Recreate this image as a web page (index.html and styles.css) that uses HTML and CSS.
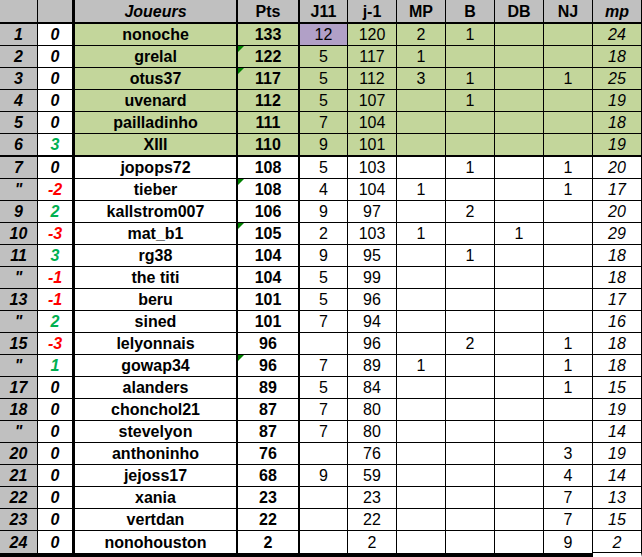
FILE: index.html
```html
<!DOCTYPE html>
<html lang="fr">
<head>
<meta charset="utf-8">
<title>Classement</title>
<link rel="stylesheet" href="styles.css">
</head>
<body>
<div class="sheet">
  <div class="row head">
    <div class="c"></div><div class="c"></div><div class="c it">Joueurs</div><div class="c">Pts</div><div class="c">J11</div><div class="c">j-1</div><div class="c">MP</div><div class="c">B</div><div class="c">DB</div><div class="c">NJ</div><div class="c it">mp</div>
  </div>
  <div class="row top">
    <div class="c">1</div><div class="c">0</div><div class="c">nonoche</div><div class="c">133</div><div class="c purple">12</div><div class="c">120</div><div class="c">2</div><div class="c">1</div><div class="c"></div><div class="c"></div><div class="c">24</div>
  </div>
  <div class="row top">
    <div class="c">2</div><div class="c">0</div><div class="c">grelal</div><div class="c tri">122</div><div class="c">5</div><div class="c">117</div><div class="c">1</div><div class="c"></div><div class="c"></div><div class="c"></div><div class="c">18</div>
  </div>
  <div class="row top">
    <div class="c">3</div><div class="c">0</div><div class="c">otus37</div><div class="c tri">117</div><div class="c">5</div><div class="c">112</div><div class="c">3</div><div class="c">1</div><div class="c"></div><div class="c">1</div><div class="c">25</div>
  </div>
  <div class="row top">
    <div class="c">4</div><div class="c">0</div><div class="c">uvenard</div><div class="c">112</div><div class="c">5</div><div class="c">107</div><div class="c"></div><div class="c">1</div><div class="c"></div><div class="c"></div><div class="c">19</div>
  </div>
  <div class="row top">
    <div class="c">5</div><div class="c">0</div><div class="c">pailladinho</div><div class="c">111</div><div class="c">7</div><div class="c">104</div><div class="c"></div><div class="c"></div><div class="c"></div><div class="c"></div><div class="c">18</div>
  </div>
  <div class="row top sep">
    <div class="c">6</div><div class="c up">3</div><div class="c">XIII</div><div class="c">110</div><div class="c">9</div><div class="c">101</div><div class="c"></div><div class="c"></div><div class="c"></div><div class="c"></div><div class="c">19</div>
  </div>
  <div class="row">
    <div class="c">7</div><div class="c">0</div><div class="c">jopops72</div><div class="c">108</div><div class="c">5</div><div class="c">103</div><div class="c"></div><div class="c">1</div><div class="c"></div><div class="c">1</div><div class="c">20</div>
  </div>
  <div class="row">
    <div class="c">"</div><div class="c down">-2</div><div class="c">tieber</div><div class="c tri">108</div><div class="c">4</div><div class="c">104</div><div class="c">1</div><div class="c"></div><div class="c"></div><div class="c">1</div><div class="c">17</div>
  </div>
  <div class="row">
    <div class="c">9</div><div class="c up">2</div><div class="c">kallstrom007</div><div class="c">106</div><div class="c">9</div><div class="c">97</div><div class="c"></div><div class="c">2</div><div class="c"></div><div class="c"></div><div class="c">20</div>
  </div>
  <div class="row">
    <div class="c">10</div><div class="c down">-3</div><div class="c">mat_b1</div><div class="c tri">105</div><div class="c">2</div><div class="c">103</div><div class="c">1</div><div class="c"></div><div class="c">1</div><div class="c"></div><div class="c">29</div>
  </div>
  <div class="row">
    <div class="c">11</div><div class="c up">3</div><div class="c">rg38</div><div class="c">104</div><div class="c">9</div><div class="c">95</div><div class="c"></div><div class="c">1</div><div class="c"></div><div class="c"></div><div class="c">18</div>
  </div>
  <div class="row">
    <div class="c">"</div><div class="c down">-1</div><div class="c">the titi</div><div class="c">104</div><div class="c">5</div><div class="c">99</div><div class="c"></div><div class="c"></div><div class="c"></div><div class="c"></div><div class="c">18</div>
  </div>
  <div class="row">
    <div class="c">13</div><div class="c down">-1</div><div class="c">beru</div><div class="c">101</div><div class="c">5</div><div class="c">96</div><div class="c"></div><div class="c"></div><div class="c"></div><div class="c"></div><div class="c">17</div>
  </div>
  <div class="row">
    <div class="c">"</div><div class="c up">2</div><div class="c">sined</div><div class="c">101</div><div class="c">7</div><div class="c">94</div><div class="c"></div><div class="c"></div><div class="c"></div><div class="c"></div><div class="c">16</div>
  </div>
  <div class="row">
    <div class="c">15</div><div class="c down">-3</div><div class="c">lelyonnais</div><div class="c">96</div><div class="c"></div><div class="c">96</div><div class="c"></div><div class="c">2</div><div class="c"></div><div class="c">1</div><div class="c">18</div>
  </div>
  <div class="row">
    <div class="c">"</div><div class="c up">1</div><div class="c">gowap34</div><div class="c tri">96</div><div class="c">7</div><div class="c">89</div><div class="c">1</div><div class="c"></div><div class="c"></div><div class="c">1</div><div class="c">18</div>
  </div>
  <div class="row">
    <div class="c">17</div><div class="c">0</div><div class="c">alanders</div><div class="c">89</div><div class="c">5</div><div class="c">84</div><div class="c"></div><div class="c"></div><div class="c"></div><div class="c">1</div><div class="c">15</div>
  </div>
  <div class="row">
    <div class="c">18</div><div class="c">0</div><div class="c">chonchol21</div><div class="c">87</div><div class="c">7</div><div class="c">80</div><div class="c"></div><div class="c"></div><div class="c"></div><div class="c"></div><div class="c">19</div>
  </div>
  <div class="row">
    <div class="c">"</div><div class="c">0</div><div class="c">stevelyon</div><div class="c">87</div><div class="c">7</div><div class="c">80</div><div class="c"></div><div class="c"></div><div class="c"></div><div class="c"></div><div class="c">14</div>
  </div>
  <div class="row">
    <div class="c">20</div><div class="c">0</div><div class="c">anthoninho</div><div class="c">76</div><div class="c"></div><div class="c">76</div><div class="c"></div><div class="c"></div><div class="c"></div><div class="c">3</div><div class="c">19</div>
  </div>
  <div class="row">
    <div class="c">21</div><div class="c">0</div><div class="c">jejoss17</div><div class="c">68</div><div class="c">9</div><div class="c">59</div><div class="c"></div><div class="c"></div><div class="c"></div><div class="c">4</div><div class="c">14</div>
  </div>
  <div class="row">
    <div class="c">22</div><div class="c">0</div><div class="c">xania</div><div class="c">23</div><div class="c"></div><div class="c">23</div><div class="c"></div><div class="c"></div><div class="c"></div><div class="c">7</div><div class="c">13</div>
  </div>
  <div class="row">
    <div class="c">23</div><div class="c">0</div><div class="c">vertdan</div><div class="c">22</div><div class="c"></div><div class="c">22</div><div class="c"></div><div class="c"></div><div class="c"></div><div class="c">7</div><div class="c">15</div>
  </div>
  <div class="row last">
    <div class="c">24</div><div class="c">0</div><div class="c">nonohouston</div><div class="c">2</div><div class="c"></div><div class="c">2</div><div class="c"></div><div class="c"></div><div class="c"></div><div class="c">9</div><div class="c">2</div>
  </div>
</div>
</body>
</html>
```
FILE: styles.css
```css
html, body {
  margin: 0;
  padding: 0;
  background: #ffffff;
}

body {
  font-family: "Liberation Sans", Arial, sans-serif;
  font-size: 16px;
  color: #000000;
}

.sheet {
  display: grid;
  width: 642px;
  grid-template-columns: 38px 37px 163px 62px 48px 49px 49px 49px 49px 49px 49px;
  grid-template-rows: 24px repeat(5, 22px) 23px repeat(17, 22px) 26px;
}

.row {
  display: contents;
}

.c {
  position: relative;
  box-sizing: border-box;
  display: flex;
  align-items: center;
  justify-content: center;
  border-right: 1px solid #000;
  border-bottom: 1px solid #000;
  background: #ffffff;
  white-space: nowrap;
  overflow: hidden;
  padding-top: 1px;
}

/* column rules */
.c:nth-child(1) {
  background: #c0c0c0;
  font-weight: bold;
  font-style: italic;
}
.c:nth-child(2) {
  border-right-width: 3px;
  font-weight: bold;
  font-style: italic;
}
.c:nth-child(3) {
  border-right-width: 2px;
  font-weight: bold;
}
.c:nth-child(4) {
  border-right-width: 2px;
  font-weight: bold;
}
.c:nth-child(11) {
  font-style: italic;
}

/* header */
.head .c {
  background: #c0c0c0;
  font-weight: bold;
  font-style: normal;
  border-bottom-width: 2px;
}
.head .c.it {
  font-style: italic;
}

/* top-6 highlighted rows */
.top .c:nth-child(n+3) {
  background: #c3d69b;
}
.top .c.purple {
  background: #b1a0c7;
}

.sep .c {
  border-bottom-width: 2px;
}

.last .c {
  border-bottom-width: 4px;
  padding-top: 1px;
}
.last .c:nth-child(11) {
  border-bottom: 4px solid #fff;
  box-shadow: inset 0 -1px 0 #000;
}

/* change colours */
.up {
  color: #00b050;
}
.down {
  color: #ff0000;
}

/* green error-indicator triangle */
.tri::before {
  content: "";
  position: absolute;
  top: 0;
  left: 0;
  width: 0;
  height: 0;
  border-top: 6px solid #008000;
  border-right: 6px solid transparent;
}
```
